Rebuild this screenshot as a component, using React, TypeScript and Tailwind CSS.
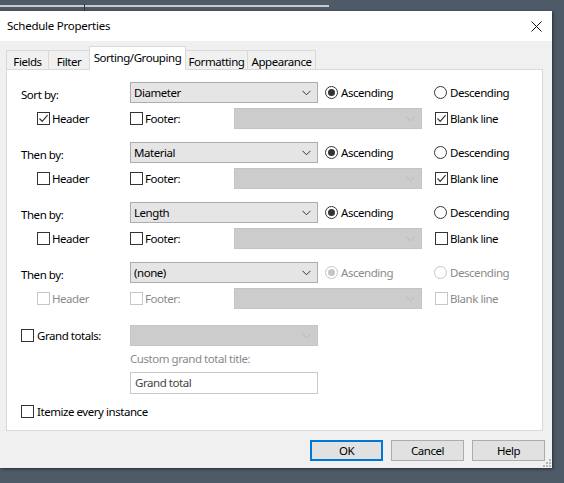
import React from "react";

const FONT = { fontFamily: '"Noto Sans", "Open Sans", sans-serif' };

function Chevron({ disabled }: { disabled?: boolean }) {
  return (
    <svg width="9" height="6" viewBox="0 0 9 6" className="shrink-0">
      <path d="M0.5 0.8 L4.5 4.8 L8.5 0.8" fill="none" stroke={disabled ? "#b8b8b8" : "#333"} strokeWidth="1" />
    </svg>
  );
}

function Txt({ children, className = "" }: { children: React.ReactNode; className?: string }) {
  return <span className={`text-[11.5px] tracking-[-0.45px] leading-none whitespace-nowrap ${className}`}>{children}</span>;
}

function Combo({ value, disabled }: { value?: string; disabled?: boolean }) {
  return (
    <div
      className={`w-[188px] h-[21px] shrink-0 flex items-center justify-between pl-[3px] pr-[6px] border ${
        disabled ? "bg-[#cccccc] border-[#c4c4c4]" : "bg-[#e5e5e5] border-[#adadad]"
      }`}
    >
      <Txt className="text-black">{value ?? ""}</Txt>
      <Chevron disabled={disabled} />
    </div>
  );
}

function Check({ checked, disabled }: { checked?: boolean; disabled?: boolean }) {
  return (
    <div
      className={`w-[13px] h-[13px] shrink-0 border bg-white flex items-center justify-center ${
        disabled ? "border-[#c6c6c6]" : "border-[#333333]"
      }`}
    >
      {checked && (
        <svg width="11" height="11" viewBox="0 0 11 11">
          <path d="M1.5 5.5 L4.2 8.3 L9.6 2.2" fill="none" stroke="#333" strokeWidth="1.2" />
        </svg>
      )}
    </div>
  );
}

function Radio({ checked, disabled }: { checked?: boolean; disabled?: boolean }) {
  return (
    <div
      className={`w-[13px] h-[13px] shrink-0 rounded-full border bg-white flex items-center justify-center ${
        disabled ? "border-[#c6c6c6]" : "border-[#333333]"
      }`}
    >
      {checked && <div className={`w-[7px] h-[7px] rounded-full ${disabled ? "bg-[#c6c6c6]" : "bg-[#333333]"}`} />}
    </div>
  );
}

function Label({ children, disabled }: { children: React.ReactNode; disabled?: boolean }) {
  return <Txt className={disabled ? "text-[#8a8a8a]" : "text-black"}>{children}</Txt>;
}

type Group = {
  label: string;
  value: string;
  asc: boolean;
  header: boolean;
  blank: boolean;
  disabled?: boolean;
};

const groups: Group[] = [
  { label: "Sort by:", value: "Diameter", asc: true, header: true, blank: true },
  { label: "Then by:", value: "Material", asc: true, header: false, blank: true },
  { label: "Then by:", value: "Length", asc: true, header: false, blank: false },
  { label: "Then by:", value: "(none)", asc: true, header: false, blank: false, disabled: true },
];

function SortGroup({ g }: { g: Group }) {
  const d = g.disabled;
  return (
    <div className="flex flex-col gap-[5px]">
      <div className="flex items-center h-[21px] pl-[14px]">
        <div className="w-[109px] shrink-0">
          <Label>{g.label}</Label>
        </div>
        <Combo value={g.value} />
        <div className="ml-[7px] w-[109px] shrink-0 flex items-center gap-[3px]">
          <Radio checked={g.asc} disabled={d} />
          <Label disabled={d}>Ascending</Label>
        </div>
        <div className="flex items-center gap-[3px]">
          <Radio disabled={d} />
          <Label disabled={d}>Descending</Label>
        </div>
      </div>
      <div className="flex items-center h-[21px] pl-[30px]">
        <div className="w-[93px] shrink-0 flex items-center gap-[2px]">
          <Check checked={g.header} disabled={d} />
          <Label disabled={d}>Header</Label>
        </div>
        <div className="w-[104px] shrink-0 flex items-center gap-[2px]">
          <Check disabled={d} />
          <Label disabled={d}>Footer:</Label>
        </div>
        <Combo disabled />
        <div className="ml-[13px] flex items-center gap-[2px]">
          <Check checked={g.blank} disabled={d} />
          <Label disabled={d}>Blank line</Label>
        </div>
      </div>
    </div>
  );
}

function Tab({ label, w, active }: { label: string; w: string; active?: boolean }) {
  if (active) {
    return (
      <div
        className={`${w} h-[24px] shrink-0 bg-white border border-b-0 border-[#d9d9d9] flex justify-center pt-[5px] relative z-10 -mb-px -mr-px`}
      >
        <Label>{label}</Label>
      </div>
    );
  }
  return (
    <div
      className={`${w} h-[19px] shrink-0 mt-[4px] bg-[#f0f0f0] border border-b-0 border-[#d9d9d9] -mr-px flex justify-center pt-[5px]`}
    >
      <Label>{label}</Label>
    </div>
  );
}

function Button({ label, primary }: { label: string; primary?: boolean }) {
  return (
    <div
      className={`w-[73px] h-[21px] bg-[#e1e1e1] flex items-center justify-center ${
        primary ? "border-2 border-[#0078d7]" : "border border-[#adadad]"
      }`}
    >
      <Label>{label}</Label>
    </div>
  );
}

export default function App() {
  return (
    <div className="w-[564px] h-[483px] bg-[#4e5a68] overflow-hidden" style={FONT}>
      {/* background window edge */}
      <div className="h-[11px] relative">
        <div className="absolute left-0 top-[5px] w-[329px] h-[2px] bg-[#c9c9c9]" />
        <div className="absolute left-[84px] top-[4px] w-px h-[7px] bg-[#333]" />
      </div>
      {/* dialog */}
      <div className="w-[552px] h-[457px] flex flex-col relative shadow-[1px_1px_3px_rgba(0,0,0,0.5)]">
        <div className="h-[30px] bg-white flex items-center justify-between pl-[7px] pr-[10px]">
          <span className="text-[11.5px] tracking-[-0.25px] text-black">Schedule Properties</span>
          <svg width="11" height="11" viewBox="0 0 11 11">
            <path d="M0.5 0.5 L10.5 10.5 M10.5 0.5 L0.5 10.5" stroke="#111" strokeWidth="1" />
          </svg>
        </div>
        <div className="flex-1 bg-[#f0f0f0] flex flex-col pt-[5px] pl-[6px] pr-[9px]">
          <div className="flex items-start h-[23px]">
            <Tab label="Fields" w="w-[43px]" />
            <Tab label="Filter" w="w-[42px]" />
            <Tab label="Sorting/Grouping" w="w-[97px]" active />
            <Tab label="Formatting" w="w-[63px]" />
            <Tab label="Appearance" w="w-[69px]" />
          </div>
          <div className="h-[362px] bg-white border border-[#d9d9d9] flex flex-col pt-[12px]">
            <div className="flex flex-col gap-[13px]">
              {groups.map((g, i) => (
                <SortGroup key={i} g={g} />
              ))}
            </div>
            <div className="mt-[16px] flex items-center h-[21px] pl-[14px]">
              <div className="w-[109px] shrink-0 flex items-center gap-[3px]">
                <Check />
                <Label>Grand totals:</Label>
              </div>
              <Combo disabled />
            </div>
            <div className="pl-[123px] mt-[6px] h-[14px] flex items-center">
              <Label disabled>Custom grand total title:</Label>
            </div>
            <div className="pl-[123px] mt-[6px]">
              <div className="w-[188px] h-[22px] border border-[#c8c8c8] bg-white flex items-center pl-[4px]">
                <Txt className="text-[#444]">Grand total</Txt>
              </div>
            </div>
            <div className="mt-[11px] pl-[14px] flex items-center gap-[3px]">
              <Check />
              <Label>Itemize every instance</Label>
            </div>
          </div>
          <div className="flex justify-end gap-[8px] mt-[9px] -mr-[2px]">
            <Button label="OK" primary />
            <Button label="Cancel" />
            <Button label="Help" />
          </div>
        </div>
        <svg className="absolute right-[1px] bottom-[1px]" width="8" height="8" viewBox="0 0 8 8">
          {[
            [6, 0],
            [6, 3],
            [3, 3],
            [6, 6],
            [3, 6],
            [0, 6],
          ].map(([x, y], i) => (
            <rect key={i} x={x} y={y} width="2" height="2" fill="#b5b5b5" />
          ))}
        </svg>
      </div>
    </div>
  );
}
